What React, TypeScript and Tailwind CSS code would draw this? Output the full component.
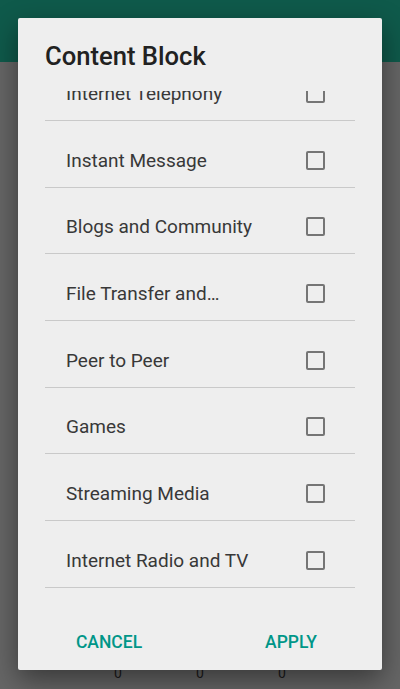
import { useState } from 'react';

const CATEGORIES = [
  'Internet Telephony',
  'Instant Message',
  'Blogs and Community',
  'File Transfer and…',
  'Peer to Peer',
  'Games',
  'Streaming Media',
  'Internet Radio and TV',
];

function Checkbox({ checked, onToggle }: { checked: boolean; onToggle: () => void }) {
  return (
    <button
      type="button"
      onClick={onToggle}
      className="flex h-[19px] w-[19px] shrink-0 items-center justify-center rounded-[2px] border-2 border-[#757575]"
    >
      {checked && <span className="h-[9px] w-[9px] bg-[#009688]" />}
    </button>
  );
}

export default function App() {
  const [picked, setPicked] = useState<Record<string, boolean>>({});

  return (
    <div
      className="relative h-[689px] w-[400px] overflow-hidden bg-[#666666]"
      style={{ fontFamily: 'Roboto, "Noto Sans", sans-serif' }}
    >
      {/* ── Dimmed page behind the dialog ── */}
      <div className="h-[62px] bg-[#0f5a4b]" />
      <div className="mt-[603px] flex justify-center text-[14px] leading-[16px] text-[#1c1c1c]">
        <span className="w-[82px] text-center">0</span>
        <span className="w-[82px] text-center">0</span>
        <span className="w-[82px] text-center">0</span>
      </div>

      {/* ── Dialog ── */}
      <div className="absolute left-[18px] top-[18px] flex h-[652px] w-[364px] flex-col rounded-[2px] bg-[#eeeeee] shadow-[0_10px_28px_rgba(0,0,0,0.45)]">
        <h2 className="px-[27px] pt-[24px] text-[25.6px] font-medium leading-[28px] text-[#212121]">
          Content Block
        </h2>

        <div className="mt-[21px] h-[513px] overflow-hidden">
          <ul className="mx-[27px] -mt-[36.67px]">
            {CATEGORIES.map(label => (
              <li key={label} className="border-b border-[#c9c9c9] pt-[13px]">
                <div className="flex h-[52.67px] items-center justify-between pl-[21px] pr-[30px]">
                  <span className="whitespace-nowrap text-[19px] leading-[23px] text-[#383838]">{label}</span>
                  <Checkbox
                    checked={!!picked[label]}
                    onToggle={() => setPicked(p => ({ ...p, [label]: !p[label] }))}
                  />
                </div>
              </li>
            ))}
          </ul>
        </div>

        <div className="flex h-[66px] items-center pt-[11px]">
          <button type="button" className="flex-1 text-center text-[17.5px] font-medium uppercase text-[#009688]">
            Cancel
          </button>
          <button type="button" className="flex-1 text-center text-[17.5px] font-medium uppercase text-[#009688]">
            Apply
          </button>
        </div>
      </div>
    </div>
  );
}
